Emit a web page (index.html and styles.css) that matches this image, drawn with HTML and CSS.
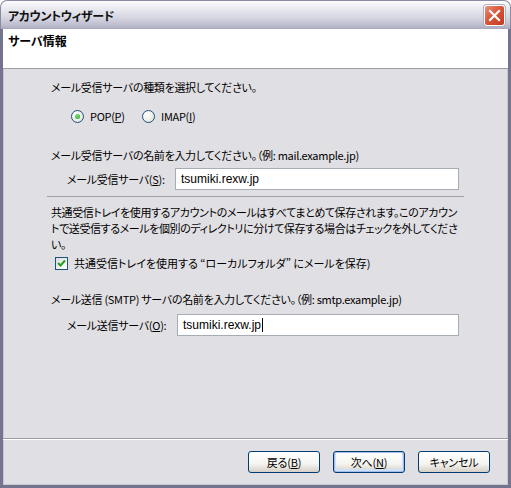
FILE: index.html
```html
<!DOCTYPE html>
<html lang="ja">
<head>
    <meta charset="UTF-8">
    <title>アカウントウィザード</title>
    <link rel="stylesheet" href="styles.css">
</head>
<body>
    <div class="window">
        <div class="title_bar">
            <span class="title">アカウントウィザード</span>
            <div class="close_btn">
                <svg width="13" height="13" viewBox="0 0 13 13"><path d="M2 2 L11 11 M11 2 L2 11" stroke="#fff" stroke-width="2.2" stroke-linecap="square"/></svg>
            </div>
        </div>
        <div class="frame">
            <div class="header">
                <h2>サーバ情報</h2>
            </div>
            <div class="main">
                <p class="line">メール受信サーバの種類を選択してください。</p>
                <div class="radios">
                    <label class="radio"><span class="radio_dot checked"></span><span>POP(<u>P</u>)</span></label>
                    <label class="radio"><span class="radio_dot"></span><span>IMAP(<u>I</u>)</span></label>
                </div>
                <p class="line gap_big">メール受信サーバの名前を入力してください。（例: mail.example.jp)</p>
                <div class="field">
                    <span class="field_label">メール受信サーバ(<u>S</u>):</span>
                    <div class="input">tsumiki.rexw.jp</div>
                </div>
                <div class="sep"></div>
                <p class="para">共通受信トレイを使用するアカウントのメールはすべてまとめて保存されます。このアカウン<br>トで送受信するメールを個別のディレクトリに分けて保存する場合はチェックを外してくださ<br>い。</p>
                <label class="check">
                    <span class="check_box">
                        <svg width="9" height="9" viewBox="0 0 9 9"><path d="M1 4 L3.5 6.5 L8 1.5" fill="none" stroke="#21a121" stroke-width="2"/></svg>
                    </span>
                    <span>共通受信トレイを使用する “ローカルフォルダ” にメールを保存)</span>
                </label>
                <p class="line gap_smtp">メール送信 (SMTP) サーバの名前を入力してください。（例: smtp.example.jp)</p>
                <div class="field field2">
                    <span class="field_label">メール送信サーバ(<u>O</u>):</span>
                    <div class="input">tsumiki.rexw.jp<span class="caret"></span></div>
                </div>
            </div>
            <div class="footer">
                <div class="btn"><span>戻る(<u>B</u>)</span></div>
                <div class="btn default"><span>次へ(<u>N</u>)</span></div>
                <div class="btn"><span>キャンセル</span></div>
            </div>
        </div>
    </div>
</body>
</html>
```

FILE: styles.css
```css
*{
    margin:0;
    padding:0;
    box-sizing:border-box;
}
body{
    width:511px;
    height:488px;
    font-family:"Liberation Sans","Noto Sans CJK JP",sans-serif;
    font-size:12px;
    color:#000;
    background:#fff;
}
.window{
    width:511px;
    height:488px;
    display:flex;
    flex-direction:column;
}
.title_bar{
    height:29px;
    display:flex;
    align-items:center;
    justify-content:space-between;
    padding:0 5px 0 7px;
    border-radius:7px 7px 0 0;
    border:1px solid #8a8aa2;
    border-bottom:none;
    background:linear-gradient(#fcfcfe 0%,#ebebf1 25%,#d6d6e2 60%,#b9b9cc 90%,#a8a8bd 100%);
}
.title{
    font-family:"Noto Sans CJK JP",sans-serif;
    font-feature-settings:"palt";
    font-size:12px;
    font-weight:bold;
    color:#111;
    letter-spacing:-0.4px;
}
.close_btn{
    width:21px;
    height:21px;
    border:1px solid #fff;
    border-radius:3px;
    background:linear-gradient(135deg,#e9927b 0%,#d9573a 45%,#c23a1f 100%);
    box-shadow:0 0 0 1px #b0b0c0;
    display:flex;
    align-items:center;
    justify-content:center;
}
.frame{
    flex:1;
    display:flex;
    flex-direction:column;
    background:#e0dfe3;
    border:3px solid #74748e;
    border-top:none;
    box-shadow:inset 1px 0 0 #c8c8d4,inset -1px 0 0 #c8c8d4,inset 0 -1px 0 #c8c8d4;
}
.header{
    height:40px;
    background:#fff;
    border-bottom:1px solid #9d9da1;
    padding:4px 5px;
}
.header h2{
    font-family:"Noto Sans CJK JP",sans-serif;
    font-feature-settings:"palt";
    font-size:12px;
    font-weight:bold;
    line-height:16px;
}
.main{
    flex:1;
    padding:10px 49px 0 48px;
    font-family:"Noto Sans CJK JP",sans-serif;
    font-feature-settings:"palt";
    font-size:11px;
    letter-spacing:-0.3px;
}
.line,.para{
    line-height:16px;
    white-space:nowrap;
}
.para{
    letter-spacing:-0.4px;
}
.radios{
    display:flex;
    margin-top:13px;
    padding-left:20px;
    height:16px;
}
.radio{
    display:flex;
    align-items:center;
    gap:6px;
    width:71px;
    white-space:nowrap;
}
.radio_dot{
    flex:none;
    width:13px;
    height:13px;
    border-radius:50%;
    border:1px solid #1c5180;
    background:radial-gradient(circle at 35% 35%,#fff 0%,#f0f0ea 50%,#d8d6cc 100%);
    display:flex;
    align-items:center;
    justify-content:center;
}
.radio_dot.checked::after{
    content:"";
    width:5px;
    height:5px;
    border-radius:50%;
    background:radial-gradient(circle at 40% 40%,#7ee07e,#21a121);
}
.gap_big{
    margin-top:23px;
}
.field{
    display:flex;
    align-items:center;
    margin-top:5px;
    padding-left:16px;
}
.field_label{
    flex:none;
    width:108px;
    white-space:nowrap;
}
.field2 .field_label{
    width:110px;
}
.input{
    flex:1;
    height:22px;
    background:#fff;
    border:1px solid #a5acb2;
    padding:0 5px;
    display:flex;
    align-items:center;
    font-family:"Liberation Sans",sans-serif;
    font-size:12px;
    letter-spacing:0;
}
.caret{
    display:inline-block;
    width:1px;
    height:14px;
    background:#000;
    margin-left:1px;
}
.sep{
    height:1px;
    background:#a0a0a4;
    margin:6px 0 0 -4px;
    width:417px;
}
.para{
    margin-top:7px;
}
.check{
    display:flex;
    align-items:center;
    gap:6px;
    margin-top:3px;
    padding-left:4px;
    height:16px;
    white-space:nowrap;
    letter-spacing:0;
}
.check_box{
    flex:none;
    width:13px;
    height:13px;
    border:1px solid #1c5180;
    background:linear-gradient(135deg,#dcdcd7,#fff);
    display:flex;
    align-items:center;
    justify-content:center;
}
.gap_smtp{
    margin-top:20px;
}
.field2{
    margin-top:7px;
}
.footer{
    height:47px;
    border-top:1px solid #9d9da1;
    box-shadow:inset 0 1px 0 #fff;
    display:flex;
    justify-content:flex-end;
    gap:13px;
    padding:12px 18px 0 0;
}
.btn{
    width:72px;
    height:22px;
    border:1px solid #003c74;
    border-radius:3px;
    background:linear-gradient(#ffffff 0%,#f4f4f0 60%,#d6d0c5 100%);
    display:flex;
    align-items:center;
    justify-content:center;
    font-family:"Noto Sans CJK JP",sans-serif;
    font-feature-settings:"palt";
    font-size:11px;
    letter-spacing:-0.2px;
}
.btn.default{
    box-shadow:inset 0 0 0 1px #a4bde9,inset 0 -1px 0 2px #cfe0fa;
}
```
